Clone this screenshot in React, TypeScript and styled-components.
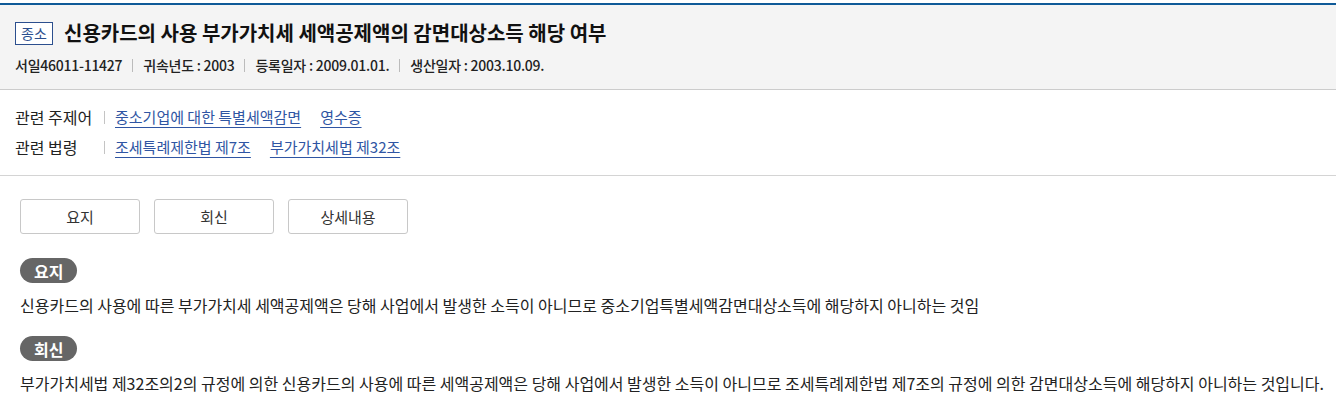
import React from "react";
import styled, { createGlobalStyle } from "styled-components";

const Global = createGlobalStyle`
  html, body { margin: 0; padding: 0; background: #fff; }
  body { font-family: "Noto Sans CJK KR", "Noto Sans", sans-serif; color: #222; }
  * { box-sizing: border-box; }
`;

const Page = styled.div`
  padding-top: 3px;
`;

const Header = styled.header`
  background: #f4f4f4;
  border-top: 2px solid #0f5a98;
  border-bottom: 1px solid #cccccc;
  padding: 16px 15px 14px;
`;

const TitleRow = styled.div`
  display: flex;
  align-items: center;
  gap: 11px;
  height: 24px;
`;

const TypeBadge = styled.span`
  display: inline-flex;
  align-items: center;
  justify-content: center;
  width: 38px;
  height: 23px;
  border: 1px solid #2c4f8e;
  background: #fff;
  color: #2c4f8e;
  font-size: 14px;
  line-height: 1;
`;

const Title = styled.h1`
  margin: 0;
  font-size: 20px;
  font-weight: 700;
  color: #111;
  line-height: 24px;
`;

const Meta = styled.div`
  display: flex;
  align-items: center;
  margin-top: 10px;
  font-size: 14px;
  font-weight: 500;
  color: #222;
  line-height: 20px;
  letter-spacing: -0.25px;
`;

const MetaItem = styled.span`
  display: inline-flex;
  align-items: center;
  & + &::before {
    content: "";
    display: inline-block;
    width: 1px;
    height: 13px;
    background: #bbb;
    margin: 0 10px;
  }
`;

const Related = styled.section`
  border-bottom: 1px solid #d4d4d4;
  padding: 16px 15px 17px;
  display: flex;
  flex-direction: column;
  gap: 8px;
`;

const RelRow = styled.div`
  display: flex;
  align-items: center;
  font-size: 15px;
  line-height: 22px;
`;

const RelLabel = styled.span`
  width: 90px;
  color: #222;
  font-size: 16px;
  display: inline-flex;
  align-items: center;
  &::after {
    content: "";
    display: inline-block;
    width: 1px;
    height: 13px;
    background: #c4c4c4;
    margin-left: auto;
  }
`;

const RelLinks = styled.span`
  display: flex;
  gap: 19px;
  margin-left: 10px;
`;

const RelLink = styled.a`
  color: #2f55a3;
  text-decoration: underline;
  text-underline-offset: 4px;
  text-decoration-thickness: 1px;
  cursor: pointer;
`;

const Body = styled.section`
  padding: 23px 20px 0;
`;

const Tabs = styled.div`
  display: flex;
  gap: 14px;
`;

const TabButton = styled.button`
  width: 120px;
  height: 35px;
  border: 1px solid #c8c8c8;
  border-radius: 3px;
  background: #fff;
  color: #333;
  font-family: inherit;
  font-size: 15px;
  cursor: pointer;
`;

const Block = styled.div<{ $top: number }>`
  margin-top: ${(p) => p.$top}px;
`;

const Pill = styled.span`
  display: inline-flex;
  align-items: center;
  justify-content: center;
  height: 25px;
  padding: 0 14px;
  border-radius: 13px;
  background: #666666;
  color: #fff;
  font-size: 16px;
  font-weight: 700;
`;

const Para = styled.p`
  margin: 11px 0 0;
  font-size: 16px;
  line-height: 22px;
  color: #222;
  white-space: nowrap;
`;

const App: React.FC = () => (
  <Page>
    <Global />
    <Header>
      <TitleRow>
        <TypeBadge>종소</TypeBadge>
        <Title>신용카드의 사용 부가가치세 세액공제액의 감면대상소득 해당 여부</Title>
      </TitleRow>
      <Meta>
        <MetaItem>서일46011-11427</MetaItem>
        <MetaItem>귀속년도 : 2003</MetaItem>
        <MetaItem>등록일자 : 2009.01.01.</MetaItem>
        <MetaItem>생산일자 : 2003.10.09.</MetaItem>
      </Meta>
    </Header>
    <Related>
      <RelRow>
        <RelLabel>관련 주제어</RelLabel>
        <RelLinks>
          <RelLink>중소기업에 대한 특별세액감면</RelLink>
          <RelLink>영수증</RelLink>
        </RelLinks>
      </RelRow>
      <RelRow>
        <RelLabel>관련 법령</RelLabel>
        <RelLinks>
          <RelLink>조세특례제한법 제7조</RelLink>
          <RelLink>부가가치세법 제32조</RelLink>
        </RelLinks>
      </RelRow>
    </Related>
    <Body>
      <Tabs>
        <TabButton>요지</TabButton>
        <TabButton>회신</TabButton>
        <TabButton>상세내용</TabButton>
      </Tabs>
      <Block $top={24}>
        <Pill>요지</Pill>
        <Para>
          신용카드의 사용에 따른 부가가치세 세액공제액은 당해 사업에서 발생한 소득이 아니므로 중소기업특별세액감면대상소득에 해당하지 아니하는 것임
        </Para>
      </Block>
      <Block $top={20}>
        <Pill>회신</Pill>
        <Para>
          부가가치세법 제32조의2의 규정에 의한 신용카드의 사용에 따른 세액공제액은 당해 사업에서 발생한 소득이 아니므로 조세특례제한법 제7조의 규정에 의한 감면대상소득에 해당하지 아니하는 것입니다.
        </Para>
      </Block>
    </Body>
  </Page>
);

export default App;
